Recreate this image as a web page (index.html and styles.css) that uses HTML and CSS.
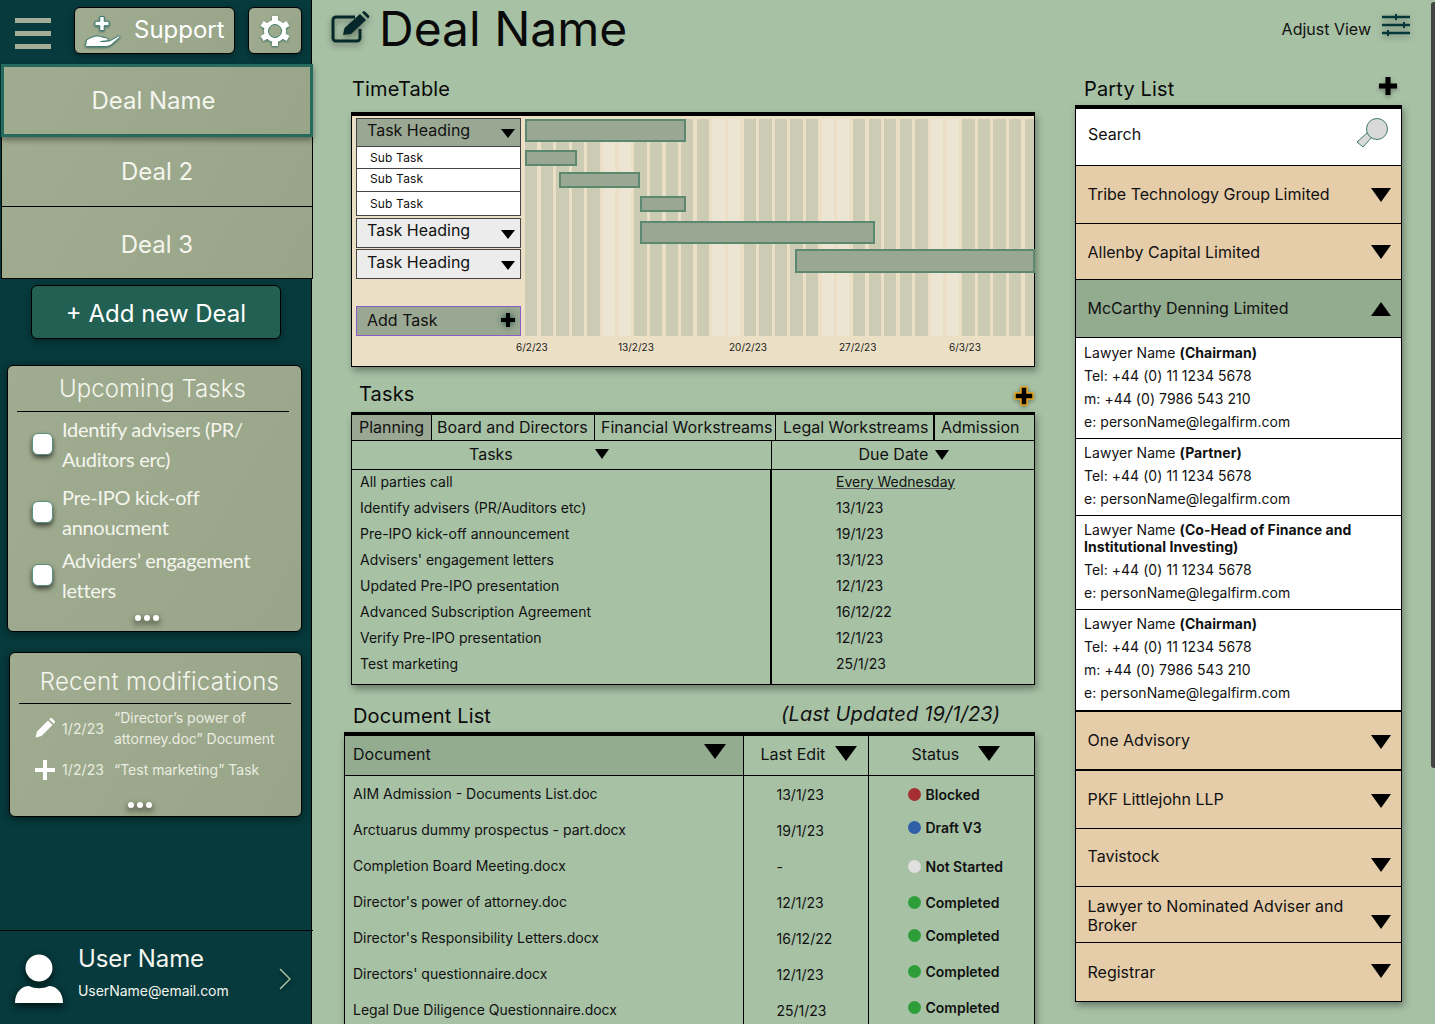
FILE: index.html
```html
<!DOCTYPE html>
<html lang="en">
<head>
  <meta charset="UTF-8">
  <meta name="viewport" content="width=device-width, initial-scale=1.0">
  <title>Deal Name</title>
  <link rel="stylesheet" href="styles.css">
</head>
<body>
  <aside class="sidebar">
    <div class="side-top">
      <div class="burger"><span></span><span></span><span></span></div>
      <button class="side-btn support">
        <svg class="hand" viewBox="0 0 40 42" width="40" height="42"><path d="M15.800 6.500h4.400v4.800h4.800v4.400h-4.800v4.800h-4.400v-4.800H11v-4.400h4.800z" fill="#fff" stroke="#3f7c6f" stroke-width="1"/><path d="M1.500 36l1-6c5-3 10-5 14-3.500l6 1.500c2 .6 2 2.500 0 3l-6 .5 9-.5 9-5c1-.5 2 .3 1 1.500l-8 7c-2 1.500-4 2-6 2H2z" fill="#fff" stroke="#3f7c6f" stroke-width="1"/></svg>
        <span>Support</span>
      </button>
      <button class="side-btn gear">
        <svg viewBox="0 0 32 32" width="32" height="32"><g stroke="#fff" stroke-width="6" fill="none"><line x1="16" y1="1" x2="16" y2="31"/><line x1="3" y1="8.500" x2="29" y2="23.500"/><line x1="3" y1="23.500" x2="29" y2="8.500"/></g><circle cx="16" cy="16" r="11" fill="#fff"/><circle cx="16" cy="16" r="6.500" fill="#9ca98b" stroke="#3f7c6f" stroke-width="1"/></svg>
      </button>
    </div>

    <div class="deal deal-active">Deal Name</div>
    <div class="deal">Deal 2</div>
    <div class="deal deal-last">Deal 3</div>
    <button class="add-deal">+ Add new Deal</button>

    <div class="card upcoming">
      <h3>Upcoming Tasks</h3>
      <div class="todo todo-1"><span class="check"></span><p>Identify advisers (PR/<br>Auditors erc)</p></div>
      <div class="todo todo-2"><span class="check"></span><p>Pre-IPO kick-off<br>annoucment</p></div>
      <div class="todo todo-3"><span class="check"></span><p>Adviders’ engagement<br>letters</p></div>
      <div class="dots"><i></i><i></i><i></i></div>
    </div>

    <div class="card recent">
      <h3>Recent modifications</h3>
      <div class="mod">
        <svg viewBox="0 0 20 20" width="20" height="20"><path d="M0.500 19.500l1.500-6L13 2.500l4.500 4.500L6.500 18zM14.200 1.300l1-1c.6-.5 1.200-.5 1.800 0l2.700 2.700c.5.600.5 1.200 0 1.800l-1 1z" fill="#fff"/></svg>
        <span class="mod-date">1/2/23</span>
        <span class="mod-text">“Director’s power of attorney.doc” Document</span>
      </div>
      <div class="mod mod-two">
        <svg viewBox="0 0 20 20" width="20" height="20"><path d="M8 0h4v8h8v4h-8v8H8v-8H0V8h8z" fill="#fff"/></svg>
        <span class="mod-date">1/2/23</span>
        <span class="mod-text">“Test marketing” Task</span>
      </div>
      <div class="dots"><i></i><i></i><i></i></div>
    </div>

    <div class="user">
      <svg class="avatar" viewBox="0 0 48 50" width="48" height="50"><circle cx="24" cy="14" r="13.500" fill="#fff"/><path d="M0 49c0-11 7-17 14-17 6 3 14 3 20 0 7 0 14 6 14 17z" fill="#fff"/></svg>
      <div class="user-info">
        <div class="user-name">User Name</div>
        <div class="user-mail">UserName@email.com</div>
      </div>
      <svg class="chev" viewBox="0 0 12 22" width="12" height="22"><path d="M1 1l10 10L1 21" fill="none" stroke="#a7c1a5" stroke-width="1.500"/></svg>
    </div>
  </aside>

  <main class="main">
    <header class="topbar">
      <svg class="edit-icon" viewBox="0 0 40 32" width="40" height="32"><path d="M24 6H5a3 3 0 0 0-3 3v18a3 3 0 0 0 3 3h21a3 3 0 0 0 3-3v-9" fill="none" stroke="#06282a" stroke-width="3"/><path d="M12 24l1.500-7L29 3l6 6-15 14zM31 1.500l1-1c.7-.5 1.500-.5 2 0l4 4c.5.600.5 1.300 0 2l-1 1z" fill="#06282a"/></svg>
      <h1>Deal Name</h1>
      <div class="adjust">
        <span>Adjust View</span>
        <svg viewBox="0 0 30 22" width="30" height="22"><g stroke="#06383a" stroke-width="2.500"><line x1="1" y1="3" x2="29" y2="3"/><line x1="1" y1="11" x2="29" y2="11"/><line x1="1" y1="19" x2="29" y2="19"/></g><g stroke="#06383a" stroke-width="2"><line x1="15" y1="0" x2="15" y2="6"/><line x1="23" y1="8" x2="23" y2="14"/><line x1="7" y1="16" x2="7" y2="22"/></g></svg>
      </div>
    </header>

    <div class="columns">
      <div class="center">
        <h2 class="sec-title tt-title">TimeTable</h2>
        <section class="panel timetable">
          <div class="tt-body">
            <div class="tt-list">
              <div class="tt-head tt-open"><span>Task Heading</span><b class="tri tri-sm"></b></div>
              <div class="tt-sub tt-s1">Sub Task</div>
              <div class="tt-sub tt-s2">Sub Task</div>
              <div class="tt-sub tt-s3">Sub Task</div>
              <div class="tt-head tt-h2"><span>Task Heading</span><b class="tri tri-sm"></b></div>
              <div class="tt-head tt-h3"><span>Task Heading</span><b class="tri tri-sm"></b></div>
              <div class="tt-add"><span>Add Task</span>
                <svg viewBox="0 0 14 14" width="14" height="14"><path d="M5 0h4v5h5v4H9v5H5V9H0V5h5z" fill="#000"/></svg>
              </div>
            </div>
            <div class="gantt">
              <div class="bar" style="left:0;top:0;width:161px;height:23px"></div>
              <div class="bar" style="left:0;top:31px;width:52px;height:16px"></div>
              <div class="bar" style="left:34px;top:53px;width:81px;height:16px"></div>
              <div class="bar" style="left:115px;top:77px;width:46px;height:16px"></div>
              <div class="bar" style="left:115px;top:102px;width:235px;height:23px"></div>
              <div class="bar" style="left:270px;top:130px;width:240px;height:24px"></div>
            </div>
          </div>
          <div class="tt-dates"><span>6/2/23</span><span>13/2/23</span><span>20/2/23</span><span>27/2/23</span><span>6/3/23</span></div>
        </section>

        <div class="tasks-head">
          <h2 class="sec-title">Tasks</h2>
          <svg class="plus-orange" viewBox="0 0 20 20" width="20" height="20"><path d="M7 1h6v6h6v6h-6v6H7v-6H1V7h6z" fill="#000" stroke="#e9a31c" stroke-width="1.500"/></svg>
        </div>
        <section class="panel tasks">
          <div class="tabs">
            <div class="tab tab-on t1">Planning</div>
            <div class="tab t2">Board and Directors</div>
            <div class="tab t3">Financial Workstreams</div>
            <div class="tab t4">Legal Workstreams</div>
            <div class="tab t5">Admission</div>
          </div>
          <table class="task-table">
            <colgroup><col class="c-task"><col></colgroup>
            <tr>
              <th class="th-task">Tasks<b class="tri tri-md th-tri1"></b></th>
              <th class="th-due">Due Date<b class="tri tri-md th-tri2"></b></th>
            </tr>
            <tr class="first-row"><td>All parties call</td><td class="due"><u>Every Wednesday</u></td></tr>
            <tr><td>Identify advisers (PR/Auditors etc)</td><td class="due">13/1/23</td></tr>
            <tr><td>Pre-IPO kick-off announcement</td><td class="due">19/1/23</td></tr>
            <tr><td>Advisers' engagement letters</td><td class="due">13/1/23</td></tr>
            <tr><td>Updated Pre-IPO presentation</td><td class="due">12/1/23</td></tr>
            <tr><td>Advanced Subscription Agreement</td><td class="due">16/12/22</td></tr>
            <tr><td>Verify Pre-IPO presentation</td><td class="due">12/1/23</td></tr>
            <tr><td>Test marketing</td><td class="due">25/1/23</td></tr>
          </table>
        </section>

        <div class="docs-head">
          <h2 class="sec-title">Document List</h2>
          <span class="updated">(Last Updated 19/1/23)</span>
        </div>
        <section class="panel docs">
          <table class="doc-table">
            <colgroup><col class="c-doc"><col class="c-edit"><col></colgroup>
            <tr>
              <th class="th-doc"><div>Document<b class="tri tri-lg"></b></div></th>
              <th class="th-edit"><div>Last Edit<b class="tri tri-lg"></b></div></th>
              <th class="th-status"><div>Status<b class="tri tri-lg"></b></div></th>
            </tr>
            <tr><td class="d-name">AIM Admission - Documents List.doc</td><td class="d-date">13/1/23</td><td class="status"><i class="dot red"></i>Blocked</td></tr>
            <tr><td class="d-name">Arctuarus dummy prospectus - part.docx</td><td class="d-date">19/1/23</td><td class="status raised"><i class="dot blue"></i>Draft V3</td></tr>
            <tr><td class="d-name">Completion Board Meeting.docx</td><td class="d-date">-</td><td class="status"><i class="dot grey"></i>Not Started</td></tr>
            <tr><td class="d-name">Director's power of attorney.doc</td><td class="d-date">12/1/23</td><td class="status"><i class="dot green"></i>Completed</td></tr>
            <tr><td class="d-name">Director's Responsibility Letters.docx</td><td class="d-date">16/12/22</td><td class="status raised"><i class="dot green"></i>Completed</td></tr>
            <tr><td class="d-name">Directors' questionnaire.docx</td><td class="d-date">12/1/23</td><td class="status raised"><i class="dot green"></i>Completed</td></tr>
            <tr><td class="d-name">Legal Due Diligence Questionnaire.docx</td><td class="d-date">25/1/23</td><td class="status raised"><i class="dot green"></i>Completed</td></tr>
          </table>
        </section>
      </div>

      <div class="right">
        <div class="party-head">
          <h2 class="sec-title">Party List</h2>
          <svg class="plus-black" viewBox="0 0 18 18" width="18" height="18"><path d="M6.500 0h5v6.500H18v5h-6.500V18h-5v-6.500H0v-5h6.500z" fill="#000"/></svg>
        </div>
        <section class="panel party">
          <div class="search">
            <span>Search</span>
            <svg viewBox="0 0 33 31" width="33" height="31"><path d="M1 25l6 5 9-10-5-4z" fill="#d9d9d9" stroke="#3f7c6f"/><circle cx="21" cy="12" r="10.500" fill="#d9d9d9" stroke="#3f7c6f"/></svg>
          </div>
          <div class="row h57">Tribe Technology Group Limited<b class="tri tri-xl"></b></div>
          <div class="row h56 nudge">Allenby Capital Limited<b class="tri tri-xl"></b></div>
          <div class="row row-open">McCarthy Denning Limited<b class="tri tri-xl tri-up"></b></div>
          <div class="contact">
            <p>Lawyer Name <strong>(Chairman)</strong></p>
            <p>Tel: +44 (0) 11 1234 5678</p>
            <p>m: +44 (0) 7986 543 210</p>
            <p>e: personName@legalfirm.com</p>
          </div>
          <div class="contact contact-short">
            <p>Lawyer Name <strong>(Partner)</strong></p>
            <p>Tel: +44 (0) 11 1234 5678</p>
            <p>e: personName@legalfirm.com</p>
          </div>
          <div class="contact">
            <p class="role-wrap">Lawyer Name <strong>(Co-Head of Finance and</strong><br><strong>Institutional Investing)</strong></p>
            <p>Tel: +44 (0) 11 1234 5678</p>
            <p>e: personName@legalfirm.com</p>
          </div>
          <div class="contact contact-last">
            <p>Lawyer Name <strong>(Chairman)</strong></p>
            <p>Tel: +44 (0) 11 1234 5678</p>
            <p>m: +44 (0) 7986 543 210</p>
            <p>e: personName@legalfirm.com</p>
          </div>
          <div class="row thick">One Advisory<b class="tri tri-xl tri-low"></b></div>
          <div class="row h57">PKF Littlejohn LLP<b class="tri tri-xl tri-low"></b></div>
          <div class="row h57 tavistock"><span>Tavistock</span><b class="tri tri-xl"></b></div>
          <div class="row h56 wrap"><span>Lawyer to Nominated Adviser and Broker</span><b class="tri tri-xl"></b></div>
          <div class="row h57 row-last">Registrar<b class="tri tri-xl tri-high"></b></div>
        </section>
      </div>
    </div>
  </main>

  <div class="scroll-thumb"></div>
</body>
</html>
```

FILE: styles.css
```css
* { box-sizing: border-box; }
html, body { height: 100%; }
body { margin: 0; width: 1435px; height: 1024px; overflow: hidden; display: flex; font-family: Inter, "Liberation Sans", sans-serif; background-color: #a7c1a5; color: #111; position: relative; }
h1, h2, h3, p { margin: 0; font-weight: 400; }
button { font-family: inherit; cursor: pointer; }
svg { display: block; flex: none; }

/* triangles */
.tri { display: inline-block; width: 0; height: 0; border-style: solid; border-color: #000 transparent transparent; flex: none; }
.tri-sm { border-width: 9px 7px 0; }
.tri-md { border-width: 10px 7.5px 0; }
.tri-lg { border-width: 15px 11px 0; }
.tri-xl { border-width: 14px 10.5px 0; }
.tri-up { border-width: 0 10.5px 14px; border-color: transparent transparent #000; }
.tri-low { margin-top: 3px; }
.tri-high { margin-top: -2px; }

/* sidebar */
.sidebar { width: 312px; height: 1024px; flex: none; display: flex; flex-direction: column; background-color: #063a3c; border-right: 1px solid #000; }
.side-top { display: flex; align-items: center; height: 47px; margin: 7px 0 10px; padding-left: 15px; }
.burger { width: 36px; display: flex; flex-direction: column; gap: 8px; margin: 6px 23px 0 0; }
.burger span { height: 5px; background-color: #a3ad98; }
.side-btn { height: 47px; display: flex; align-items: center; background: linear-gradient(120deg, #a0ac8f, #98a588); border: 1px solid #000; border-radius: 6px; color: #fff; box-shadow: 0 2px 6px rgba(0, 0, 0, 0.35); padding: 0; }
.support { width: 161px; font-size: 24px; padding-left: 9px; margin-right: 13px; gap: 10px; }
.support span { padding-bottom: 2px; }
.hand { filter: drop-shadow(0 1px 1px rgba(30, 90, 80, 0.7)); }
.gear { width: 54px; justify-content: center; }
.gear svg { filter: drop-shadow(0 1px 1px #2f6c60); }

.deal { width: 312px; margin-left: 1px; height: 70px; display: flex; align-items: center; justify-content: center; color: #f4f5ee; font-size: 24px; background: linear-gradient(120deg, #a0ac8f, #98a588); border: 1px solid #000; border-top: 0; }
.deal-last { height: 72px; padding-top: 4px; }
.deal-active { height: 73px; border: 3px solid #246b5e; box-shadow: 0 3px 6px rgba(0, 0, 0, 0.4); position: relative; padding: 0 7px 1px 0; margin-left: 1px; }
.add-deal { width: 250px; height: 54px; margin: 6px 0 0 31px; padding: 2px 0 0; background-color: #216052; color: #fff; font-size: 24px; border: 1px solid #000; border-radius: 6px; box-shadow: 0 3px 7px rgba(0, 0, 0, 0.35); }

.card { background: linear-gradient(120deg, #a0ac8f, #98a588); border: 1px solid #000; border-radius: 6px; box-shadow: 0 2px 8px rgba(0, 0, 0, 0.45); color: #f4f5ee; }
.card h3 { font-size: 24px; font-weight: 300; text-align: center; border-bottom: 1px solid #000; margin: 0 12px 0 9px; }
.upcoming { width: 295px; height: 267px; margin: 26px 0 0 7px; }
.upcoming h3 { height: 46px; line-height: 45px; padding-right: 1px; letter-spacing: 0.1px; }
.todo { display: flex; align-items: center; margin-left: 24px; font-family: Lato, sans-serif; font-size: 20px; font-weight: 300; line-height: 30px; letter-spacing: -0.3px; }
.todo-1 { margin-top: 2px; }
.todo-2 { margin-top: 8px; }
.todo-3 { margin-top: 3px; }
.check { width: 21px; height: 22px; margin-right: 9px; background-color: #fff; border: 1px solid #5a9080; border-radius: 6px; box-shadow: 0 3px 5px rgba(0, 0, 0, 0.6); }
.dots { display: flex; gap: 3px; justify-content: center; filter: drop-shadow(0 3px 3px rgba(0, 0, 0, 0.7)); }
.dots i { width: 6px; height: 6px; border-radius: 50%; background-color: #fff; }
.upcoming .dots { margin: 10px 16px 0 0; }
.recent { width: 293px; height: 165px; margin: 20px 0 0 9px; }
.recent h3 { height: 51px; line-height: 57px; margin-right: 10px; letter-spacing: 0.3px; padding-left: 9px; }
.mod { display: flex; align-items: center; margin: 3px 0 0 25px; font-size: 14px; line-height: 21px; color: #ebece2; }
.mod-two { margin-top: 10px; }
.mod-date { width: 52px; margin-left: 7px; letter-spacing: 0.1px; }
.mod-text { width: 170px; }
.recent .dots { margin: 22px 32px 0 0; }

.user { margin-top: auto; height: 94px; width: 313px; display: flex; align-items: center; border-top: 1px solid #000; padding-left: 15px; }
.avatar { margin-top: 2px; filter: drop-shadow(0 3px 4px rgba(0, 0, 0, 0.7)); }
.user-info { margin-left: 15px; width: 196px; color: #f4f5ee; }
.user-name { font-size: 24px; line-height: 28px; margin-top: -11px; letter-spacing: -0.1px; }
.user-mail { font-size: 14px; line-height: 17px; margin-top: 9px; letter-spacing: -0.05px; }
.chev { margin: 2px 0 0 5px; filter: drop-shadow(0 1px 2px rgba(0, 0, 0, 0.6)); }

/* main */
.main { width: 1123px; height: 1024px; overflow: hidden; }
.topbar { height: 60px; display: flex; align-items: center; padding: 0 24px 0 19px; }
.edit-icon { margin: -6px 8px 0 0; filter: drop-shadow(0 3px 3px rgba(0, 0, 0, 0.4)); }
.topbar h1 { font-size: 48px; line-height: 58px; color: #0a0a0a; margin-top: -2px; }
.adjust { margin-left: auto; display: flex; align-items: center; gap: 10px; font-size: 16px; margin-top: -2px; }
.adjust svg { margin-top: -8px; filter: drop-shadow(0 2px 3px rgba(0, 0, 0, 0.35)); }
.columns { display: flex; padding-left: 32px; }
.center { width: 691px; margin-right: 40px; }
.right { width: 327px; }
.sec-title { font-size: 20px; line-height: 24px; color: #0a0a0a; letter-spacing: 0.15px; }
.panel { background-color: #a7c1a5; border: 1px solid #000; box-shadow: 2px 4px 7px rgba(0, 0, 0, 0.35); }

/* timetable */
.tt-title { margin: 17px 0 11px 8px; }
.timetable { margin-left: 7px; width: 684px; height: 255px; background-color: #ebe0c6; border-top-width: 4px; }
.tt-body { display: flex; padding: 2px 0 0 4px; }
.tt-list { width: 165px; height: 218px; display: flex; flex-direction: column; font-size: 16px; }
.tt-head { display: flex; align-items: center; justify-content: space-between; height: 30px; padding: 0 3px 0 10px; border: 1px solid #444; background-color: #ececec; }
.tt-head span { padding-bottom: 6px; }
.tt-head .tri { margin: 2px 2px 0 0; }
.tt-open { height: 29px; background-color: #9aa792; }
.tt-h2 { margin-top: 2px; }
.tt-h3 { margin-top: 1px; }
.tt-h3 span { padding-bottom: 4px; }
.tt-sub { background-color: #fff; font-size: 12px; padding-left: 13px; border: 1px solid #444; border-top: 0; display: flex; align-items: center; letter-spacing: 0.15px; }
.tt-s1 { height: 22px; padding-bottom: 1px; }
.tt-s2 { height: 23px; padding-bottom: 3px; }
.tt-s3 { height: 24px; }
.tt-add { margin-top: auto; height: 30px; display: flex; align-items: center; justify-content: space-between; padding: 0 5px 2px 10px; background-color: #9aa792; border: 1px solid #8a5cc8; }
.tt-add svg { filter: drop-shadow(0 0 3px rgba(0, 60, 50, 0.8)); }
.gantt { position: relative; width: 509px; height: 217px; margin: 1px 0 0 4px; background: repeating-linear-gradient(90deg, #cccbb3 0 12.3px, #ebe0c6 12.3px 15.6px, #cccbb3 15.6px 27.9px, #ebe0c6 27.9px 31.2px, #cccbb3 31.2px 43.5px, #ebe0c6 43.5px 46.8px, #cccbb3 46.8px 59.1px, #ebe0c6 59.1px 62.4px, #cccbb3 62.4px 74.7px, #ebe0c6 74.7px 78px, #ece5d4 78px 90.3px, #ebe0c6 90.3px 93.6px, #ece5d4 93.6px 105.9px, #ebe0c6 105.9px 109.3px); }
.bar { position: absolute; background-color: #9aa792; border: 2px solid #5c8870; }
.tt-dates { display: grid; grid-template-columns: 102px 111px 110px 110px auto; padding: 5px 0 0 164px; font-size: 10px; line-height: 12px; color: #222; }

/* tasks */
.tasks-head { display: flex; justify-content: space-between; align-items: center; margin: 15px 0 6px 15px; }
.plus-orange { margin: 4px 1px 0 0; filter: drop-shadow(0 1px 2px rgba(0, 0, 0, 0.4)); }
.tasks { margin-left: 7px; width: 684px; height: 273px; border-top-width: 3px; }
.tabs { display: flex; height: 26px; border-bottom: 1px solid #000; font-size: 16px; }
.tab { display: flex; align-items: center; padding: 0 0 2px 6px; border-right: 1px solid #000; white-space: nowrap; }
.tab-on { background-color: #9aa792; }
.t1 { width: 80px; padding-left: 7px; }
.t2 { width: 163px; padding-left: 5px; }
.t3 { width: 181px; }
.t4 { width: 159px; border-right-width: 2px; padding-left: 7px; }
.t5 { width: 99px; border-right: 0; }
.task-table { width: 682px; border-collapse: collapse; table-layout: fixed; font-size: 14px; }
.c-task { width: 419px; }
.task-table th { height: 28px; font-size: 16px; font-weight: 400; text-align: left; border-bottom: 1px solid #000; padding: 0 0 1px; }
.th-task { padding-left: 117px !important; border-right: 1px solid #000; }
.th-due { padding-left: 87px !important; }
.th-tri1 { margin-left: 82px; vertical-align: 1px; }
.th-tri2 { margin-left: 7px; vertical-align: 0; }
.task-table td { height: 26px; padding: 4px 0 0 8px; line-height: 17px; vertical-align: top; }
.task-table .first-row td { padding-top: 3px; }
.task-table tr:last-child td { height: 34px; }
.task-table td.due { padding-left: 64px; border-left: 2px solid #000; }
.task-table u { text-decoration-color: #555; }

/* documents */
.docs-head { display: flex; align-items: center; margin: 19px 0 4px 9px; }
.updated { margin: -4px 0 0 290px; font-size: 20px; font-style: italic; letter-spacing: 0.15px; }
.docs { width: 691px; height: 320px; border-top-width: 4px; overflow: hidden; }
.doc-table { width: 689px; border-collapse: collapse; table-layout: fixed; font-size: 14px; }
.c-doc { width: 398px; }
.c-edit { width: 125px; }
.doc-table th { height: 39px; padding: 0 0 3px; font-size: 16px; font-weight: 400; border-bottom: 1px solid #000; }
.doc-table th > div { display: flex; align-items: center; }
.doc-table th + th { border-left: 1px solid #000; }
.th-doc { background-color: #93ab8f; }
.th-doc > div { padding: 0 17px 0 8px; justify-content: space-between; }
.th-doc .tri { margin-top: -4px; }
.th-edit > div { padding-left: 17px; gap: 10px; }
.th-status > div { padding-left: 43px; gap: 19px; }
.doc-table td { height: 36px; padding: 0; }
.doc-table td + td { border-left: 1px solid #000; }
.d-name { padding-left: 8px !important; }
.d-date { padding-left: 33px !important; padding-top: 2px !important; }
.status { padding-left: 39px !important; padding-top: 2px !important; font-weight: 600; }
.status.raised { padding-top: 0 !important; padding-bottom: 4px !important; }
.dot { display: inline-block; width: 13px; height: 13px; margin-right: 5px; border-radius: 50%; vertical-align: -1px; }
.red { background-color: #a52f32; }
.blue { background-color: #2f5fa8; }
.grey { background-color: #e0e0e0; }
.green { background-color: #2e9e3a; }

/* party list */
.party-head { display: flex; justify-content: space-between; align-items: flex-start; margin: 17px 0 4px 9px; height: 24px; }
.plus-black { margin: 0 5px 0 0; filter: drop-shadow(0 2px 2px rgba(0, 0, 0, 0.35)); }
.party { width: 327px; height: 897px; background-color: #fff; border-top-width: 4px; display: flex; flex-direction: column; }
.search { height: 57px; display: flex; align-items: center; justify-content: space-between; padding: 0 12px 0 12px; font-size: 16px; border-bottom: 1px solid #000; }
.search span { margin-top: -7px; }
.search svg { margin-top: -9px; }
.row { display: flex; align-items: center; justify-content: space-between; padding: 0 10px 0 11.5px; font-size: 16px; line-height: 19px; background-color: #e5cdaa; border-bottom: 1px solid #000; }
.h57 { height: 58px; }
.h56 { height: 56px; }
.nudge { padding-top: 1px; }
.row-open { height: 58px; background-color: #93ab8f; }
.tavistock span { padding-bottom: 2px; }
.tavistock .tri { margin-top: 15px; }
.wrap span { width: 270px; padding-top: 2px; }
.wrap .tri { margin-top: 14px; }
.thick { border-bottom-width: 2px; height: 59px; }
.row-last { border-bottom: 0; }
.contact { padding: 3px 8px 5px; border-bottom: 1px solid #000; background-color: #fff; font-size: 14px; line-height: 23px; letter-spacing: 0.05px; }
.contact strong { font-weight: 700; }
.contact-short { padding: 2px 8px 5px; }
.contact-last { border-bottom-width: 2px; padding: 2px 8px 6px; }
.role-wrap { line-height: 17px; padding: 2px 0 3px; }

.scroll-thumb { position: absolute; right: 0; top: 2px; width: 4px; height: 766px; background-color: #444; border-radius: 3px 0 0 3px; }
```
